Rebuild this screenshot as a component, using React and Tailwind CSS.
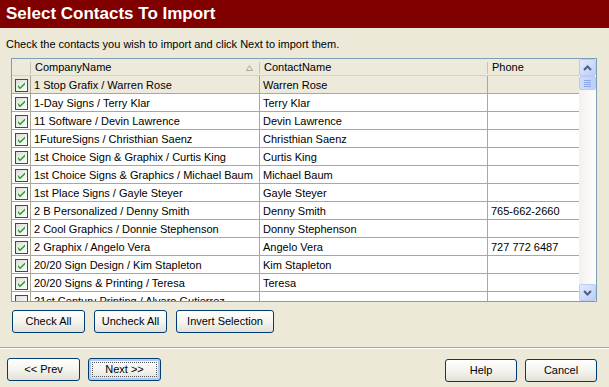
import React from 'react';

const rows = [
  { company: '1 Stop Grafix / Warren Rose', contact: 'Warren Rose', phone: '', checked: true },
  { company: '1-Day Signs / Terry Klar', contact: 'Terry Klar', phone: '', checked: true },
  { company: '11 Software / Devin Lawrence', contact: 'Devin Lawrence', phone: '', checked: true },
  { company: '1FutureSigns / Christhian Saenz', contact: 'Christhian Saenz', phone: '', checked: true },
  { company: '1st Choice Sign & Graphix / Curtis King', contact: 'Curtis King', phone: '', checked: true },
  { company: '1st Choice Signs & Graphics / Michael Baum', contact: 'Michael Baum', phone: '', checked: true },
  { company: '1st Place Signs / Gayle Steyer', contact: 'Gayle Steyer', phone: '', checked: true },
  { company: '2 B Personalized / Denny Smith', contact: 'Denny Smith', phone: '765-662-2660', checked: true },
  { company: '2 Cool Graphics / Donnie Stephenson', contact: 'Donny Stephenson', phone: '', checked: true },
  { company: '2 Graphix / Angelo Vera', contact: 'Angelo Vera', phone: '727 772 6487', checked: true },
  { company: '20/20 Sign Design / Kim Stapleton', contact: 'Kim Stapleton', phone: '', checked: true },
  { company: '20/20 Signs & Printing / Teresa', contact: 'Teresa', phone: '', checked: true },
  { company: '21st Century Printing / Alvaro Gutierrez', contact: '', phone: '', checked: false },
];

function CheckBox({ checked }) {
  return (
    <svg width="13" height="13" viewBox="0 0 13 13">
      <defs>
        <linearGradient id="cbg" x1="0" y1="0" x2="1" y2="1">
          <stop offset="0" stopColor="#dcdcd7" />
          <stop offset="1" stopColor="#ffffff" />
        </linearGradient>
      </defs>
      <rect x="0.5" y="0.5" width="12" height="12" fill="url(#cbg)" stroke="#1c5180" />
      {checked && (
        <path d="M3 6 L5 8.2 L10 3.4 L10 5.4 L5 10.2 L3 8 Z" fill="#21a121" />
      )}
    </svg>
  );
}

function XpButton({ children, className = '', focused = false }) {
  return (
    <button
      className={`h-[23px] rounded-[3px] border border-[#003c74] bg-gradient-to-b from-[#ffffff] via-[#f5f4ef] to-[#e3e1d6] text-[11px] text-black flex items-center justify-center ${focused ? 'shadow-[inset_0_0_0_2px_#b3c9f1]' : ''} ${className}`}
    >
      {focused ? (
        <span className="border border-dotted border-[#555] px-[12px] h-[15px] w-[calc(100%-6px)] flex items-center justify-center">
          {children}
        </span>
      ) : (
        children
      )}
    </button>
  );
}

function Arrow({ up }) {
  return (
    <svg width="9" height="6" viewBox="0 0 9 6">
      <path
        d={up ? 'M1 5 L4.5 1.5 L8 5' : 'M1 1 L4.5 4.5 L8 1'}
        fill="none"
        stroke="#4d6185"
        strokeWidth="2"
      />
    </svg>
  );
}

export default function App() {
  return (
    <div className="w-[609px] h-[387px] bg-[#ece9d8] flex flex-col overflow-hidden font-['Liberation_Sans',_Arial,_sans-serif] text-[11px] text-black">
      {/* title bar */}
      <div className="h-[28px] shrink-0 bg-[#800000] pl-[6px] flex items-center text-white font-bold text-[17px]">
        Select Contacts To Import
      </div>

      <p className="mt-[9px] ml-[6px] leading-[14px]">
        Check the contacts you wish to import and click Next to import them.
      </p>

      {/* grid */}
      <div className="mt-[7px] ml-[11px] w-[586px] h-[244px] border border-[#7f9db9] bg-white flex">
        <div className="flex-1 overflow-hidden">
          {/* header */}
          <div className="flex h-[17px] pt-[1px] bg-[#ebeadb] border-b border-[#d6d2c2] shadow-[0_1px_0_#e2decd]">
            <div className="w-[19px] shrink-0 flex items-center justify-end">
              <div className="w-px h-[12px] bg-[#c7c5b2]" />
            </div>
            <div className="w-[229px] shrink-0 pl-[4px] flex items-center justify-between">
              <span>CompanyName</span>
              <span className="flex items-center gap-[6px]">
                <svg width="7" height="6" viewBox="0 0 7 6">
                  <path d="M3.5 0.5 L6.5 5.5 L0.5 5.5 Z" fill="none" stroke="#aca899" />
                </svg>
                <span className="w-px h-[12px] bg-[#c7c5b2]" />
              </span>
            </div>
            <div className="w-[228px] shrink-0 pl-[4px] flex items-center justify-between">
              <span>ContactName</span>
              <span className="w-px h-[12px] bg-[#c7c5b2]" />
            </div>
            <div className="flex-1 pl-[4px] flex items-center">Phone</div>
          </div>

          {/* rows */}
          {rows.map((r, i) => (
            <div
              key={i}
              className={`flex h-[18px] border-b border-[#aca899] ${i === 0 ? 'bg-[#edeadb]' : 'bg-white'}`}
            >
              <div className="w-[19px] shrink-0 border-r border-[#aca899] pt-[2px] flex items-center justify-center">
                <CheckBox checked={r.checked} />
              </div>
              <div className="w-[229px] shrink-0 border-r border-[#aca899] pl-[3px] pt-[2px] flex items-center whitespace-nowrap overflow-hidden">
                {r.company}
              </div>
              <div className="w-[228px] shrink-0 border-r border-[#aca899] pl-[3px] pt-[2px] flex items-center whitespace-nowrap overflow-hidden">
                {r.contact}
              </div>
              <div className="flex-1 pl-[3px] pt-[2px] flex items-center whitespace-nowrap overflow-hidden">
                {r.phone}
              </div>
            </div>
          ))}
        </div>

        {/* scrollbar */}
        <div className="w-[17px] shrink-0 bg-gradient-to-r from-[#f3f1ec] to-[#fefefb] flex flex-col">
          <div className="h-[17px] rounded-[2px] border border-[#b9cbf3] bg-gradient-to-br from-[#e3ebfd] to-[#bccdf6] flex items-center justify-center">
            <Arrow up />
          </div>
          <div className="h-[14px] rounded-[2px] border border-[#b9cbf3] bg-gradient-to-r from-[#d0dcfb] to-[#bdcff8] flex flex-col items-center justify-center gap-[1px]">
            <div className="w-[7px] h-px bg-[#8ca6e6]" />
            <div className="w-[7px] h-px bg-[#8ca6e6]" />
            <div className="w-[7px] h-px bg-[#8ca6e6]" />
            <div className="w-[7px] h-px bg-[#8ca6e6]" />
          </div>
          <div className="flex-1" />
          <div className="h-[17px] rounded-[2px] border border-[#b9cbf3] bg-gradient-to-br from-[#e3ebfd] to-[#bccdf6] flex items-center justify-center">
            <Arrow />
          </div>
        </div>
      </div>

      {/* grid buttons */}
      <div className="mt-[8px] ml-[12px] flex gap-[9px]">
        <XpButton className="w-[73px]">Check All</XpButton>
        <XpButton className="w-[73px]">Uncheck All</XpButton>
        <XpButton className="w-[98px]">Invert Selection</XpButton>
      </div>

      {/* separator */}
      <div className="mt-[14px] h-px bg-[#aca899] shadow-[0_1px_0_#ffffff]" />

      {/* wizard buttons */}
      <div className="mt-[10px] flex justify-between pl-[7px] pr-[12px]">
        <div className="flex gap-[8px]">
          <XpButton className="w-[73px]">&lt;&lt; Prev</XpButton>
          <XpButton className="w-[73px]" focused>Next &gt;&gt;</XpButton>
        </div>
        <div className="flex gap-[8px] mt-[1px]">
          <XpButton className="w-[72px]">Help</XpButton>
          <XpButton className="w-[72px]">Cancel</XpButton>
        </div>
      </div>
    </div>
  );
}
